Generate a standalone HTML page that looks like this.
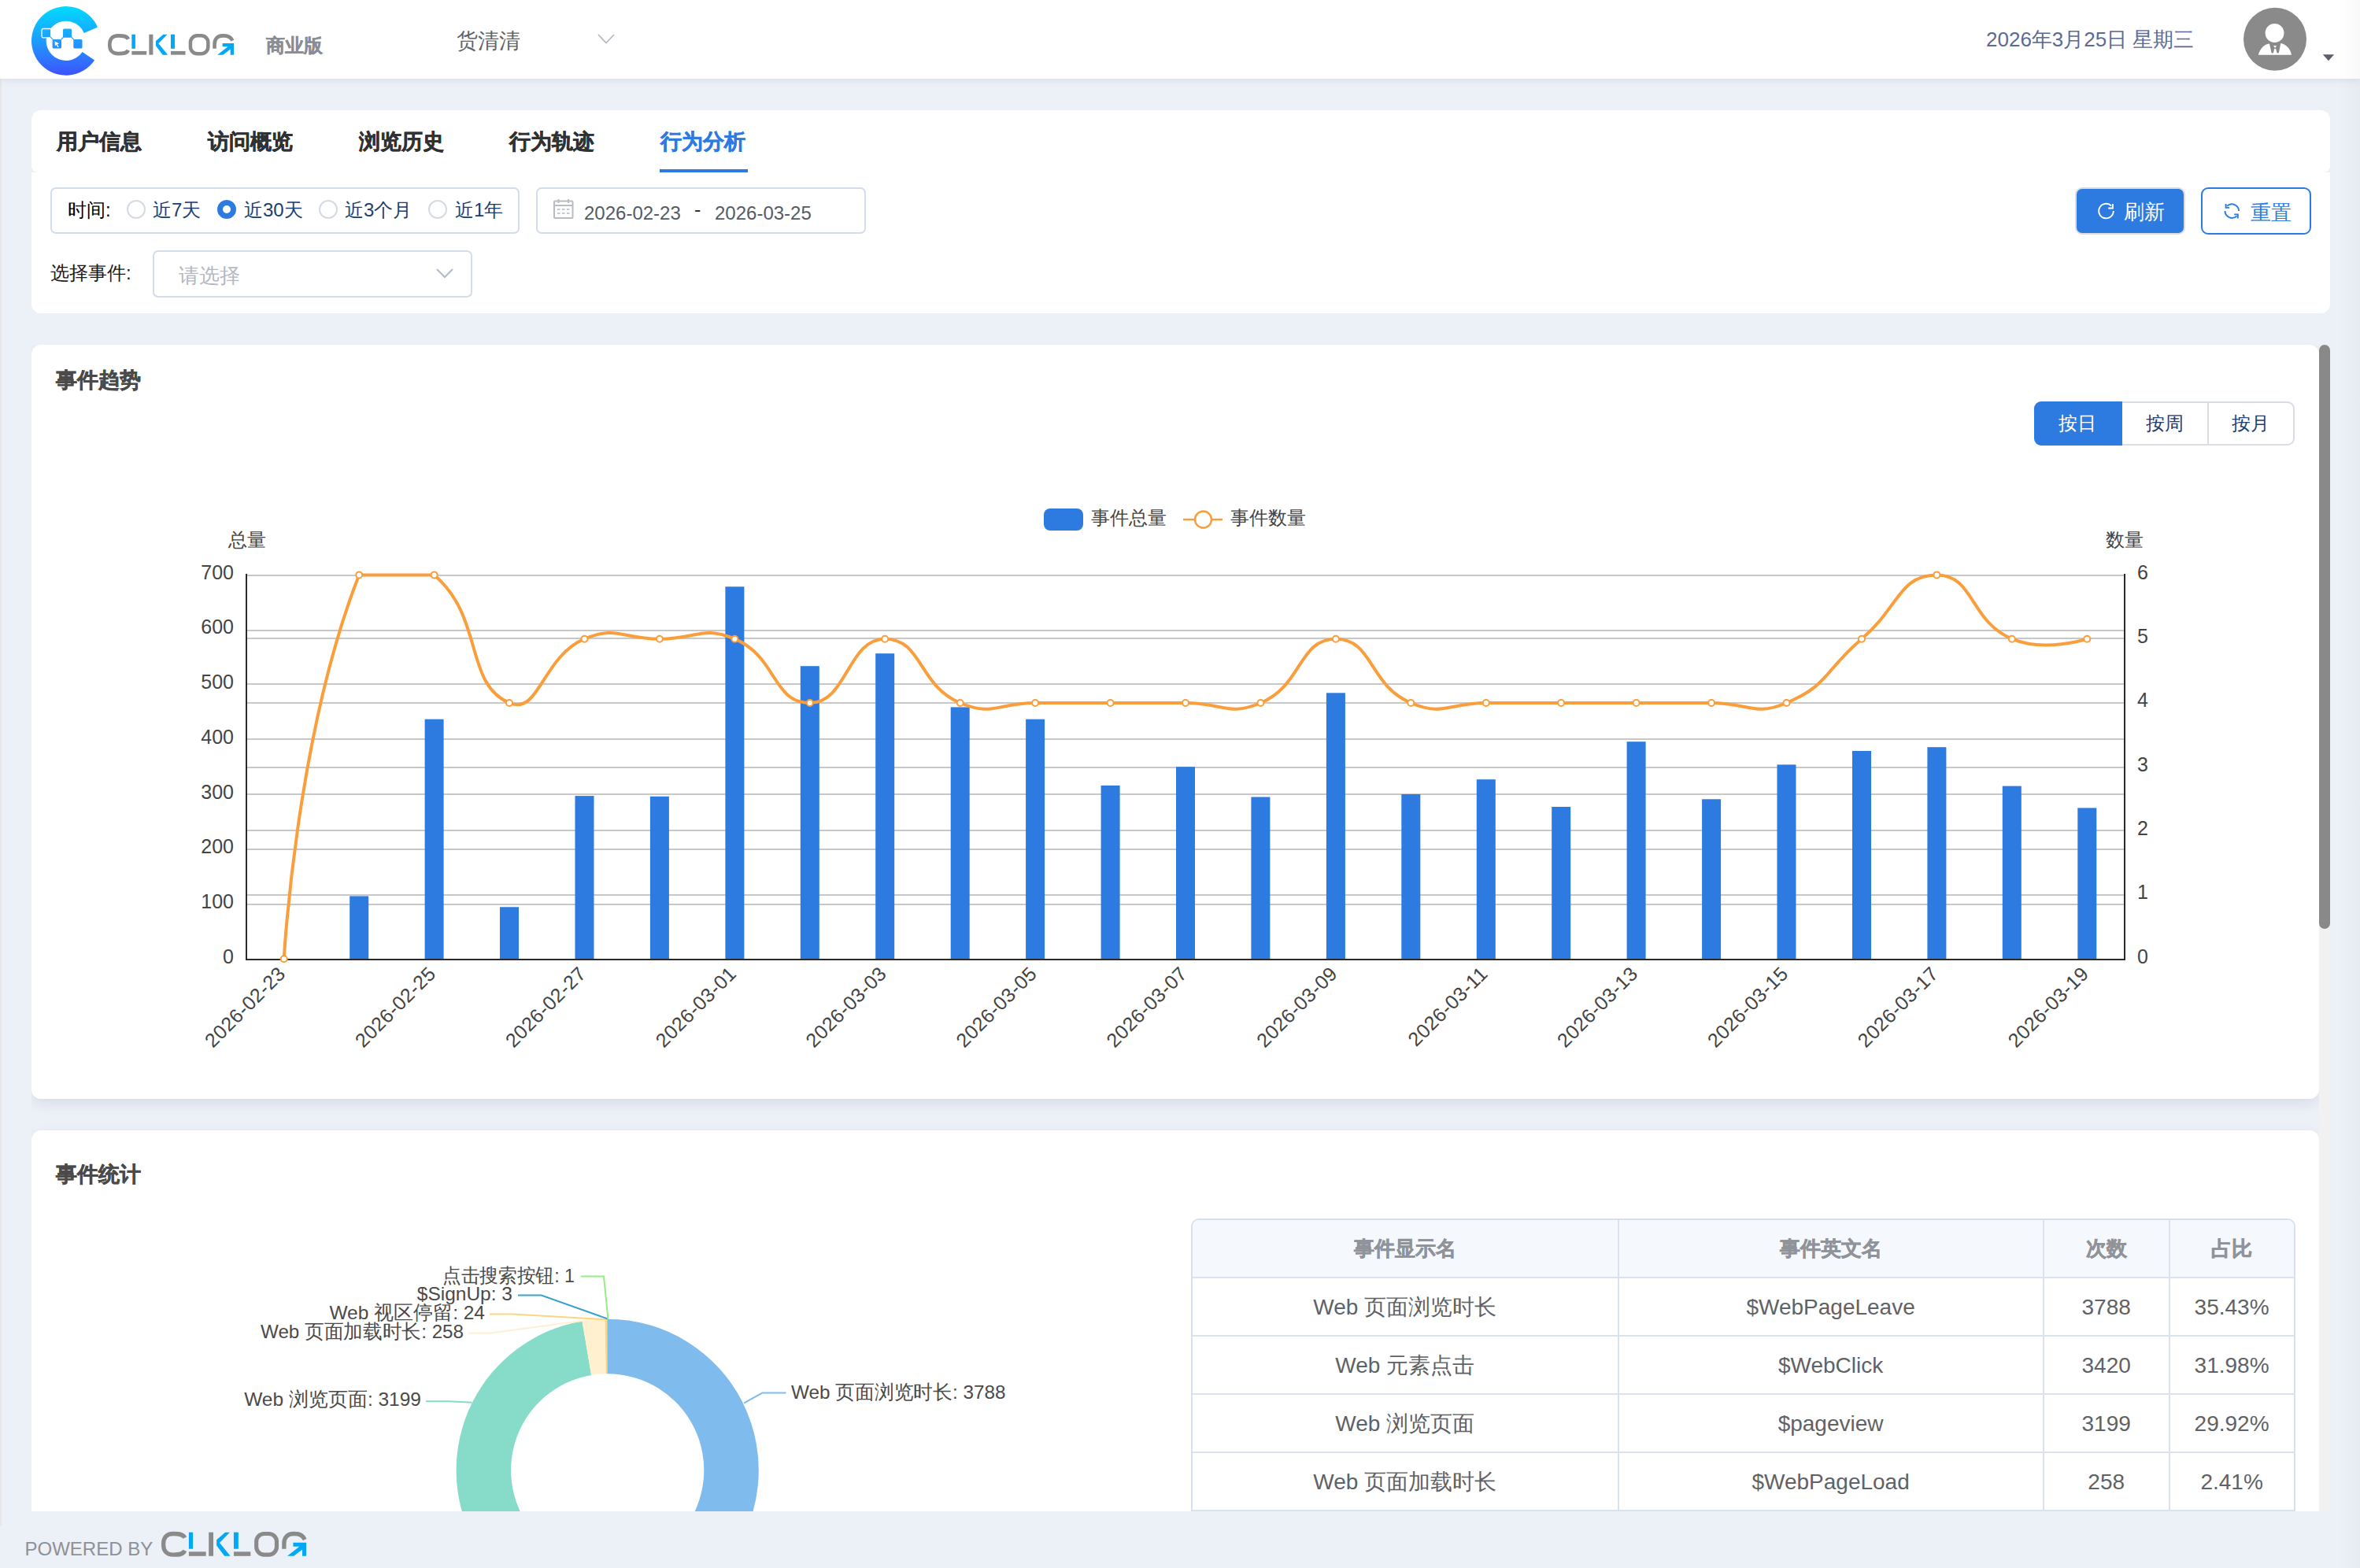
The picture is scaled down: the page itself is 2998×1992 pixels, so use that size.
<!DOCTYPE html>
<html><head><meta charset="utf-8"><title>CLKLOG</title>
<style>
*{box-sizing:border-box;margin:0;padding:0}
html,body{width:2998px;height:1992px;overflow:hidden}
body{background:#ecf0f7;font-family:"Liberation Sans", sans-serif;position:relative}
.abs{position:absolute}
.t{position:absolute;white-space:nowrap;line-height:1}
.header{position:absolute;left:0;top:0;width:2998px;height:100px;background:#fff;box-shadow:0 2px 10px rgba(0,30,80,0.08);z-index:2}
.card{position:absolute;background:#fff;border-radius:12px}
.box{position:absolute;border:2px solid #d3dcea;border-radius:7px;background:#fff}
.radio{position:absolute;width:24px;height:24px;border-radius:50%;border:2px solid #d5dae2;background:#fff}
.radio.on{background:#2d7be0;border-color:#2d7be0}
.radio.on::after{content:"";position:absolute;left:5px;top:5px;width:10px;height:10px;border-radius:50%;background:#fff}
svg text{font-family:"Liberation Sans", sans-serif}
table{border-collapse:collapse}
</style></head><body>
<div class="abs" style="left:0;top:100px;width:2px;height:1839px;background:#e6e6e6"></div>
<div class="header">
<div class="t" style="left:338px;top:45.5px;font-size:24px;font-weight:bold;color:#8a8d93;-webkit-text-stroke:0.3px #8a8d93">商业版</div>
<div class="t" style="left:579.5px;top:38.5px;font-size:27px;color:#606266">货清清</div>
<div class="t" style="left:2523px;top:37px;font-size:26px;color:#5d6a94">2026年3月25日 星期三</div>
</div>
<div class="card" style="left:40px;top:140px;width:2920px;height:79px;border-radius:12px 12px 8px 8px"></div>
<div class="card" style="left:40px;top:219px;width:2920px;height:179px;border-radius:0 0 12px 12px"></div>
<div class="t" style="left:72.0px;top:167px;font-size:27px;font-weight:bold;color:#303133;-webkit-text-stroke:0.5px #303133">用户信息</div>
<div class="t" style="left:263.8px;top:167px;font-size:27px;font-weight:bold;color:#303133;-webkit-text-stroke:0.5px #303133">访问概览</div>
<div class="t" style="left:455.5px;top:167px;font-size:27px;font-weight:bold;color:#303133;-webkit-text-stroke:0.5px #303133">浏览历史</div>
<div class="t" style="left:647.2px;top:167px;font-size:27px;font-weight:bold;color:#303133;-webkit-text-stroke:0.5px #303133">行为轨迹</div>
<div class="t" style="left:839.0px;top:167px;font-size:27px;font-weight:bold;color:#2d7be0;-webkit-text-stroke:0.5px #2d7be0">行为分析</div>
<div class="abs" style="left:838px;top:215px;width:112px;height:4px;background:#2d7be0"></div>
<div class="box" style="left:64px;top:238px;width:596px;height:59px"></div>
<div class="t" style="left:86px;top:255px;font-size:24px;color:#000">时间:</div>
<div class="radio" style="left:161px;top:254px"></div>
<div class="radio on" style="left:276px;top:254px"></div>
<div class="radio" style="left:405px;top:254px"></div>
<div class="radio" style="left:544px;top:254px"></div>
<div class="t" style="left:194px;top:255px;font-size:24px;color:#1d3c6e">近7天</div>
<div class="t" style="left:310px;top:255px;font-size:24px;color:#1d3c6e">近30天</div>
<div class="t" style="left:438px;top:255px;font-size:24px;color:#1d3c6e">近3个月</div>
<div class="t" style="left:578px;top:255px;font-size:24px;color:#1d3c6e">近1年</div>
<div class="box" style="left:681px;top:238px;width:419px;height:59px"></div>
<div class="t" style="left:742px;top:259px;font-size:24px;color:#555a63">2026-02-23</div>
<div class="t" style="left:882px;top:254px;font-size:25px;color:#303133">-</div>
<div class="t" style="left:908px;top:259px;font-size:24px;color:#555a63">2026-03-25</div>
<div class="t" style="left:64px;top:335px;font-size:24px;color:#1a1a1a">选择事件:</div>
<div class="box" style="left:194px;top:318px;width:406px;height:60px"></div>
<div class="t" style="left:226.5px;top:337.3px;font-size:26px;color:#b4b8c0">请选择</div>
<div class="abs" style="left:2636px;top:238px;width:140px;height:60px;border-radius:9px;background:#2d7be0;border:2px solid #dcdcdc"></div>
<div class="t" style="left:2698px;top:256.3px;font-size:26px;color:#fff">刷新</div>
<div class="abs" style="left:2796px;top:238px;width:140px;height:60px;border-radius:9px;background:#fff;border:2px solid #2d7be0"></div>
<div class="t" style="left:2858.7px;top:256.8px;font-size:26px;color:#2d7be0">重置</div>
<div class="abs" style="left:40px;top:438px;width:2920px;height:1482px;overflow:hidden">
<div class="card" style="left:0;top:0;width:2906px;height:958px;box-shadow:0 6px 16px rgba(40,60,100,0.10)"></div>
<div class="card" style="left:0;top:998px;width:2906px;height:700px;box-shadow:0 6px 16px rgba(40,60,100,0.10)"></div>
<div class="abs" style="left:2906px;top:0;width:14px;height:1482px;background:#f1f1f1"></div>
<div class="abs" style="left:2906px;top:0;width:14px;height:742px;background:#898989;border-radius:7px"></div>
</div>
<div class="t" style="left:70.5px;top:470px;font-size:27px;font-weight:bold;color:#4a4a4a;-webkit-text-stroke:0.5px #4a4a4a">事件趋势</div>
<div class="abs" style="left:2584px;top:510px;width:331px;height:56px;border:2px solid #d8dde6;border-radius:9px"></div>
<div class="abs" style="left:2584px;top:510px;width:112px;height:56px;background:#2d7be0;border-radius:9px 0 0 9px"></div>
<div class="abs" style="left:2804px;top:512px;width:2px;height:52px;background:#d8dde6"></div>
<div class="t" style="left:2615.3px;top:526.3px;font-size:24px;color:#fff">按日</div>
<div class="t" style="left:2725.5px;top:526.3px;font-size:24px;color:#1f3f70">按周</div>
<div class="t" style="left:2835.3px;top:526.3px;font-size:24px;color:#1f3f70">按月</div>
<div class="t" style="left:70.5px;top:1479px;font-size:27px;font-weight:bold;color:#4a4a4a;-webkit-text-stroke:0.5px #4a4a4a">事件统计</div>
<div class="abs" style="left:1513px;top:1548px;width:1403px;height:372px;overflow:hidden">
<div class="abs" style="left:0;top:0;width:1403px;height:500px;border:2px solid #d6e0ee;border-radius:10px 10px 0 0;background:#fff;overflow:hidden">
<div class="abs" style="left:0;top:0;width:1400px;height:72px;background:#f5f9fe"></div>
<div class="abs" style="left:0;top:72px;width:1400px;height:2px;background:#d9e2ee"></div>
<div class="abs" style="left:0;top:146px;width:1400px;height:2px;background:#d9e2ee"></div>
<div class="abs" style="left:0;top:220px;width:1400px;height:2px;background:#d9e2ee"></div>
<div class="abs" style="left:0;top:294px;width:1400px;height:2px;background:#d9e2ee"></div>
<div class="abs" style="left:0;top:368px;width:1400px;height:2px;background:#d9e2ee"></div>
<div class="abs" style="left:540.0px;top:0;width:2px;height:500px;background:#d9e2ee"></div>
<div class="abs" style="left:1079.9px;top:0;width:2px;height:500px;background:#d9e2ee"></div>
<div class="abs" style="left:1240.2px;top:0;width:2px;height:500px;background:#d9e2ee"></div>
</div></div>
<div class="t" style="left:1784.8px;top:1573px;width:400px;margin-left:-200px;text-align:center;font-size:26px;font-weight:bold;color:#909399;-webkit-text-stroke:0.5px #909399">事件显示名</div>
<div class="t" style="left:2325.6px;top:1573px;width:400px;margin-left:-200px;text-align:center;font-size:26px;font-weight:bold;color:#909399;-webkit-text-stroke:0.5px #909399">事件英文名</div>
<div class="t" style="left:2675.7px;top:1573px;width:400px;margin-left:-200px;text-align:center;font-size:26px;font-weight:bold;color:#909399;-webkit-text-stroke:0.5px #909399">次数</div>
<div class="t" style="left:2835.1px;top:1573px;width:400px;margin-left:-200px;text-align:center;font-size:26px;font-weight:bold;color:#909399;-webkit-text-stroke:0.5px #909399">占比</div>
<div class="t" style="left:1784.8px;top:1647px;width:500px;margin-left:-250px;text-align:center;font-size:28px;color:#606266">Web 页面浏览时长</div>
<div class="t" style="left:2325.6px;top:1647px;width:500px;margin-left:-250px;text-align:center;font-size:28px;color:#606266">$WebPageLeave</div>
<div class="t" style="left:2675.7px;top:1647px;width:500px;margin-left:-250px;text-align:center;font-size:28px;color:#606266">3788</div>
<div class="t" style="left:2835.1px;top:1647px;width:500px;margin-left:-250px;text-align:center;font-size:28px;color:#606266">35.43%</div>
<div class="t" style="left:1784.8px;top:1721px;width:500px;margin-left:-250px;text-align:center;font-size:28px;color:#606266">Web 元素点击</div>
<div class="t" style="left:2325.6px;top:1721px;width:500px;margin-left:-250px;text-align:center;font-size:28px;color:#606266">$WebClick</div>
<div class="t" style="left:2675.7px;top:1721px;width:500px;margin-left:-250px;text-align:center;font-size:28px;color:#606266">3420</div>
<div class="t" style="left:2835.1px;top:1721px;width:500px;margin-left:-250px;text-align:center;font-size:28px;color:#606266">31.98%</div>
<div class="t" style="left:1784.8px;top:1795px;width:500px;margin-left:-250px;text-align:center;font-size:28px;color:#606266">Web 浏览页面</div>
<div class="t" style="left:2325.6px;top:1795px;width:500px;margin-left:-250px;text-align:center;font-size:28px;color:#606266">$pageview</div>
<div class="t" style="left:2675.7px;top:1795px;width:500px;margin-left:-250px;text-align:center;font-size:28px;color:#606266">3199</div>
<div class="t" style="left:2835.1px;top:1795px;width:500px;margin-left:-250px;text-align:center;font-size:28px;color:#606266">29.92%</div>
<div class="t" style="left:1784.8px;top:1869px;width:500px;margin-left:-250px;text-align:center;font-size:28px;color:#606266">Web 页面加载时长</div>
<div class="t" style="left:2325.6px;top:1869px;width:500px;margin-left:-250px;text-align:center;font-size:28px;color:#606266">$WebPageLoad</div>
<div class="t" style="left:2675.7px;top:1869px;width:500px;margin-left:-250px;text-align:center;font-size:28px;color:#606266">258</div>
<div class="t" style="left:2835.1px;top:1869px;width:500px;margin-left:-250px;text-align:center;font-size:28px;color:#606266">2.41%</div>
<div class="t" style="left:31.5px;top:1956px;font-size:24px;color:#8e9196">POWERED BY</div>
<div class="abs" style="left:2970px;top:0;width:28px;height:1992px;background:linear-gradient(90deg,rgba(0,0,0,0),rgba(0,0,0,0.025));z-index:6"></div>
<svg class="abs" style="left:0;top:0;z-index:5" width="2998" height="1992" viewBox="0 0 2998 1992">
<defs>
<clipPath id="scl"><rect x="40" y="438" width="2906" height="1482"/></clipPath></defs>
<defs><linearGradient id="lg" x1="0" y1="8" x2="0" y2="96" gradientUnits="userSpaceOnUse">
<stop offset="0" stop-color="#00dcff"/><stop offset="0.5" stop-color="#1e9bff"/><stop offset="1" stop-color="#3e52ff"/></linearGradient></defs>
<g fill="url(#lg)">
<path d="M123.97 34.43 A43.80 43.80 0 1 0 120.11 76.39 L104.61 65.94 A25.10 25.10 0 1 1 106.82 41.89 Z"/>
<rect x="53.1" y="36.5" width="11.7" height="11.3" rx="1.6" stroke="#fff" stroke-width="1.3"/>
<rect x="80.0" y="36.5" width="11.0" height="11.3" rx="1.6"/>
<rect x="66.6" y="49.9" width="11.4" height="11.7" rx="1.6"/>
<rect x="93.3" y="49.9" width="11.2" height="11.7" rx="1.6"/>
</g>
<g stroke="#1ea0ff" stroke-width="1.1">
<line x1="64" y1="47" x2="67.8" y2="50.6"/><line x1="77.5" y1="50.5" x2="80.8" y2="47"/><line x1="90.5" y1="47" x2="94" y2="50.6"/></g>
<path d="M69.5 52.2 L75.2 55.5 L72.6 56.2 L74.6 59.6 L73.4 60.2 L71.5 56.8 L69.9 58.6 Z" fill="#fff"/>

<g transform="translate(137 43) scale(0.07191 0.072368) translate(-60 -75)">
<path d="M420 168 C395 112 335 107 250 107 L240 107 C140 107 92 165 92 255 L92 275 C92 365 140 423 240 423 L250 423 C335 423 395 418 420 362" fill="none" stroke="#8a8a8a" stroke-width="64"/>
<rect x="482" y="85" width="63" height="250" fill="#00a8f5"/>
<rect x="482" y="378" width="263" height="65" fill="#8a8a8a"/>
<rect x="788" y="85" width="70" height="358" fill="#8a8a8a"/>
<polygon points="1040,85 1110,85 955,245 1120,443 1030,443 908,285 908,200" fill="#00a8f5"/>
<rect x="1172" y="85" width="71" height="250" fill="#00a8f5"/>
<rect x="1172" y="378" width="258" height="65" fill="#8a8a8a"/>
<rect x="1519" y="107" width="312" height="316" rx="120" ry="120" fill="none" stroke="#8a8a8a" stroke-width="62"/>
<path d="M1945 335 L1945 255 C1945 160 2000 107 2090 107 L2110 107 C2200 107 2240 140 2262 195" fill="none" stroke="#8a8a8a" stroke-width="64"/>
<polygon points="2085,240 2285,240 2285,443 2225,443 2225,345 2095,443 1995,443 2180,300 2085,300" fill="#00a8f5"/>
</g>
<g transform="translate(205 1945.8) scale(0.082697 0.084211) translate(-60 -75)">
<path d="M420 168 C395 112 335 107 250 107 L240 107 C140 107 92 165 92 255 L92 275 C92 365 140 423 240 423 L250 423 C335 423 395 418 420 362" fill="none" stroke="#8a8a8a" stroke-width="64"/>
<rect x="482" y="85" width="63" height="250" fill="#00a8f5"/>
<rect x="482" y="378" width="263" height="65" fill="#8a8a8a"/>
<rect x="788" y="85" width="70" height="358" fill="#8a8a8a"/>
<polygon points="1040,85 1110,85 955,245 1120,443 1030,443 908,285 908,200" fill="#00a8f5"/>
<rect x="1172" y="85" width="71" height="250" fill="#00a8f5"/>
<rect x="1172" y="378" width="258" height="65" fill="#8a8a8a"/>
<rect x="1519" y="107" width="312" height="316" rx="120" ry="120" fill="none" stroke="#8a8a8a" stroke-width="62"/>
<path d="M1945 335 L1945 255 C1945 160 2000 107 2090 107 L2110 107 C2200 107 2240 140 2262 195" fill="none" stroke="#8a8a8a" stroke-width="64"/>
<polygon points="2085,240 2285,240 2285,443 2225,443 2225,345 2095,443 1995,443 2180,300 2085,300" fill="#00a8f5"/>
</g>
<polyline points="760,44 770,54.5 780,44" fill="none" stroke="#b3bac6" stroke-width="1.8"/>
<circle cx="2890" cy="49.8" r="40" fill="#8a8a8a"/>
<circle cx="2889.54" cy="42.04" r="11.92" fill="#fff"/>
<path d="M2868.75 69.83 C2871.08 61.19 2876.58 56.1 2882.88 55.39 L2897.73 54.88 C2904.64 56.71 2909.73 62.2 2911.05 69.83 Z" fill="#fff"/>
<path d="M2882.88 54.88 L2897.32 54.88 L2894.88 66.88 Q2893.66 68.1 2892.44 66.88 L2891.02 61.39 L2890.2 62.2 L2889.39 61.39 L2887.96 66.88 Q2886.74 68.1 2885.52 66.88 Z" fill="#8a8a8a"/>
<polygon points="2887.96,57.93 2892.03,57.93 2890.2,60.98" fill="#fff"/>
<polygon points="2950.8,69.3 2965.1,69.3 2958,77.3" fill="#5b606c"/>
<g fill="none" stroke="#b8bcc4" stroke-width="2"><rect x="704" y="255.5" width="23.5" height="21.5" rx="1"/><line x1="704" y1="261" x2="727.5" y2="261"/><line x1="709.5" y1="253" x2="709.5" y2="258"/><line x1="722" y1="253" x2="722" y2="258"/></g>
<g fill="#c4c8ce"><rect x="708" y="265" width="3.5" height="2"/><rect x="714" y="265" width="3.5" height="2"/><rect x="720" y="265" width="3.5" height="2"/><rect x="708" y="270" width="3.5" height="2"/><rect x="714" y="270" width="3.5" height="2"/><rect x="720" y="270" width="3.5" height="2"/></g>
<polyline points="555,342 565,352 575,342" fill="none" stroke="#b3bac6" stroke-width="2"/>
<path d="M2684.8 268.1 A9.3 9.3 0 1 1 2682.1 261.5" fill="none" stroke="#fff" stroke-width="1.9"/>
<polyline points="2678.2,264.5 2683.9,264.5 2683.9,258.9" fill="none" stroke="#fff" stroke-width="1.9"/>
<path d="M2844.1 268.1 A8.8 8.8 0 0 0 2829.1 261.9 M2826.5 268.1 A8.8 8.8 0 0 0 2841.5 274.3" fill="none" stroke="#2d7be0" stroke-width="1.9"/>
<polyline points="2827.6,259 2827.6,263.9 2832.2,263.9" fill="none" stroke="#2d7be0" stroke-width="1.9"/>
<polyline points="2838.1,272.4 2842.8,272.4 2842.8,277.4" fill="none" stroke="#2d7be0" stroke-width="1.9"/>
<g clip-path="url(#scl)">
<line x1="313.0" y1="1149.0" x2="2699.0" y2="1149.0" stroke="#c8c8c8" stroke-width="2"/>
<line x1="313.0" y1="1079.0" x2="2699.0" y2="1079.0" stroke="#c8c8c8" stroke-width="2"/>
<line x1="313.0" y1="1009.0" x2="2699.0" y2="1009.0" stroke="#c8c8c8" stroke-width="2"/>
<line x1="313.0" y1="939.0" x2="2699.0" y2="939.0" stroke="#c8c8c8" stroke-width="2"/>
<line x1="313.0" y1="869.0" x2="2699.0" y2="869.0" stroke="#c8c8c8" stroke-width="2"/>
<line x1="313.0" y1="801.0" x2="2699.0" y2="801.0" stroke="#c8c8c8" stroke-width="2"/>
<line x1="313.0" y1="731.0" x2="2699.0" y2="731.0" stroke="#c8c8c8" stroke-width="2"/>
<line x1="313.0" y1="1137.0" x2="2699.0" y2="1137.0" stroke="#c8c8c8" stroke-width="2"/>
<line x1="313.0" y1="1055.0" x2="2699.0" y2="1055.0" stroke="#c8c8c8" stroke-width="2"/>
<line x1="313.0" y1="975.0" x2="2699.0" y2="975.0" stroke="#c8c8c8" stroke-width="2"/>
<line x1="313.0" y1="893.0" x2="2699.0" y2="893.0" stroke="#c8c8c8" stroke-width="2"/>
<line x1="313.0" y1="811.0" x2="2699.0" y2="811.0" stroke="#c8c8c8" stroke-width="2"/>
<line x1="313.0" y1="731.0" x2="2699.0" y2="731.0" stroke="#c8c8c8" stroke-width="2"/>
<rect x="444.2" y="1138.4" width="24" height="80.6" fill="#2d7be0"/>
<rect x="539.6" y="913.7" width="24" height="305.3" fill="#2d7be0"/>
<rect x="635.0" y="1152.3" width="24" height="66.7" fill="#2d7be0"/>
<rect x="730.5" y="1011.1" width="24" height="207.9" fill="#2d7be0"/>
<rect x="825.9" y="1011.8" width="24" height="207.2" fill="#2d7be0"/>
<rect x="921.4" y="745.3" width="24" height="473.7" fill="#2d7be0"/>
<rect x="1016.8" y="846.2" width="24" height="372.8" fill="#2d7be0"/>
<rect x="1112.2" y="830.2" width="24" height="388.8" fill="#2d7be0"/>
<rect x="1207.7" y="898.4" width="24" height="320.6" fill="#2d7be0"/>
<rect x="1303.1" y="913.7" width="24" height="305.3" fill="#2d7be0"/>
<rect x="1398.6" y="997.9" width="24" height="221.1" fill="#2d7be0"/>
<rect x="1494.0" y="974.2" width="24" height="244.8" fill="#2d7be0"/>
<rect x="1589.4" y="1012.5" width="24" height="206.5" fill="#2d7be0"/>
<rect x="1684.9" y="880.3" width="24" height="338.7" fill="#2d7be0"/>
<rect x="1780.3" y="1009.0" width="24" height="210.0" fill="#2d7be0"/>
<rect x="1875.8" y="990.2" width="24" height="228.8" fill="#2d7be0"/>
<rect x="1971.2" y="1025.0" width="24" height="194.0" fill="#2d7be0"/>
<rect x="2066.6" y="942.2" width="24" height="276.8" fill="#2d7be0"/>
<rect x="2162.1" y="1015.3" width="24" height="203.7" fill="#2d7be0"/>
<rect x="2257.5" y="971.4" width="24" height="247.6" fill="#2d7be0"/>
<rect x="2353.0" y="954.0" width="24" height="265.0" fill="#2d7be0"/>
<rect x="2448.4" y="949.2" width="24" height="269.8" fill="#2d7be0"/>
<rect x="2543.8" y="998.6" width="24" height="220.4" fill="#2d7be0"/>
<rect x="2639.3" y="1026.4" width="24" height="192.6" fill="#2d7be0"/>
<line x1="313.0" y1="729.0" x2="313.0" y2="1220.0" stroke="#2a2a2a" stroke-width="2"/>
<line x1="2699.0" y1="729.0" x2="2699.0" y2="1220.0" stroke="#2a2a2a" stroke-width="2"/>
<line x1="312.0" y1="1219.0" x2="2700.0" y2="1219.0" stroke="#2a2a2a" stroke-width="2"/>
<path d="M360.72 1218.20 C360.72 1218.20 376.09 935.01 456.16 730.40 C471.53 730.40 519.52 730.40 551.60 730.40 C614.96 784.38 589.72 868.59 647.04 893.00 C685.16 909.24 688.29 834.78 742.48 811.70 C783.73 794.13 790.20 811.70 837.92 811.70 C885.64 811.70 892.11 794.13 933.36 811.70 C987.55 834.78 981.08 893.00 1028.80 893.00 C1076.52 893.00 1076.52 811.70 1124.24 811.70 C1171.96 811.70 1165.49 869.92 1219.68 893.00 C1260.93 910.57 1267.40 893.00 1315.12 893.00 C1362.84 893.00 1362.84 893.00 1410.56 893.00 C1458.28 893.00 1458.28 893.00 1506.00 893.00 C1553.72 893.00 1560.19 910.57 1601.44 893.00 C1655.63 869.92 1649.16 811.70 1696.88 811.70 C1744.60 811.70 1738.13 869.92 1792.32 893.00 C1833.57 910.57 1840.04 893.00 1887.76 893.00 C1935.48 893.00 1935.48 893.00 1983.20 893.00 C2030.92 893.00 2030.92 893.00 2078.64 893.00 C2126.36 893.00 2126.36 893.00 2174.08 893.00 C2221.80 893.00 2228.27 910.57 2269.52 893.00 C2323.71 869.92 2317.24 852.35 2364.96 811.70 C2412.68 771.05 2412.68 730.40 2460.40 730.40 C2508.12 730.40 2501.65 788.62 2555.84 811.70 C2597.09 829.27 2651.28 811.70 2651.28 811.70" fill="none" stroke="#fa9e3c" stroke-width="4" stroke-linejoin="round"/>
<circle cx="360.7" cy="1218.2" r="4" fill="#fff" stroke="#fa9e3c" stroke-width="2"/>
<circle cx="456.2" cy="730.4" r="4" fill="#fff" stroke="#fa9e3c" stroke-width="2"/>
<circle cx="551.6" cy="730.4" r="4" fill="#fff" stroke="#fa9e3c" stroke-width="2"/>
<circle cx="647.0" cy="893.0" r="4" fill="#fff" stroke="#fa9e3c" stroke-width="2"/>
<circle cx="742.5" cy="811.7" r="4" fill="#fff" stroke="#fa9e3c" stroke-width="2"/>
<circle cx="837.9" cy="811.7" r="4" fill="#fff" stroke="#fa9e3c" stroke-width="2"/>
<circle cx="933.4" cy="811.7" r="4" fill="#fff" stroke="#fa9e3c" stroke-width="2"/>
<circle cx="1028.8" cy="893.0" r="4" fill="#fff" stroke="#fa9e3c" stroke-width="2"/>
<circle cx="1124.2" cy="811.7" r="4" fill="#fff" stroke="#fa9e3c" stroke-width="2"/>
<circle cx="1219.7" cy="893.0" r="4" fill="#fff" stroke="#fa9e3c" stroke-width="2"/>
<circle cx="1315.1" cy="893.0" r="4" fill="#fff" stroke="#fa9e3c" stroke-width="2"/>
<circle cx="1410.6" cy="893.0" r="4" fill="#fff" stroke="#fa9e3c" stroke-width="2"/>
<circle cx="1506.0" cy="893.0" r="4" fill="#fff" stroke="#fa9e3c" stroke-width="2"/>
<circle cx="1601.4" cy="893.0" r="4" fill="#fff" stroke="#fa9e3c" stroke-width="2"/>
<circle cx="1696.9" cy="811.7" r="4" fill="#fff" stroke="#fa9e3c" stroke-width="2"/>
<circle cx="1792.3" cy="893.0" r="4" fill="#fff" stroke="#fa9e3c" stroke-width="2"/>
<circle cx="1887.8" cy="893.0" r="4" fill="#fff" stroke="#fa9e3c" stroke-width="2"/>
<circle cx="1983.2" cy="893.0" r="4" fill="#fff" stroke="#fa9e3c" stroke-width="2"/>
<circle cx="2078.6" cy="893.0" r="4" fill="#fff" stroke="#fa9e3c" stroke-width="2"/>
<circle cx="2174.1" cy="893.0" r="4" fill="#fff" stroke="#fa9e3c" stroke-width="2"/>
<circle cx="2269.5" cy="893.0" r="4" fill="#fff" stroke="#fa9e3c" stroke-width="2"/>
<circle cx="2365.0" cy="811.7" r="4" fill="#fff" stroke="#fa9e3c" stroke-width="2"/>
<circle cx="2460.4" cy="730.4" r="4" fill="#fff" stroke="#fa9e3c" stroke-width="2"/>
<circle cx="2555.8" cy="811.7" r="4" fill="#fff" stroke="#fa9e3c" stroke-width="2"/>
<circle cx="2651.3" cy="811.7" r="4" fill="#fff" stroke="#fa9e3c" stroke-width="2"/>
<text x="297" y="1223.6" font-size="25" fill="#444" text-anchor="end">0</text>
<text x="297" y="1153.9" font-size="25" fill="#444" text-anchor="end">100</text>
<text x="297" y="1084.2" font-size="25" fill="#444" text-anchor="end">200</text>
<text x="297" y="1014.5" font-size="25" fill="#444" text-anchor="end">300</text>
<text x="297" y="944.7" font-size="25" fill="#444" text-anchor="end">400</text>
<text x="297" y="875.0" font-size="25" fill="#444" text-anchor="end">500</text>
<text x="297" y="805.3" font-size="25" fill="#444" text-anchor="end">600</text>
<text x="297" y="735.6" font-size="25" fill="#444" text-anchor="end">700</text>
<text x="2715" y="1223.6" font-size="25" fill="#444">0</text>
<text x="2715" y="1142.3" font-size="25" fill="#444">1</text>
<text x="2715" y="1060.9" font-size="25" fill="#444">2</text>
<text x="2715" y="979.6" font-size="25" fill="#444">3</text>
<text x="2715" y="898.3" font-size="25" fill="#444">4</text>
<text x="2715" y="816.9" font-size="25" fill="#444">5</text>
<text x="2715" y="735.6" font-size="25" fill="#444">6</text>
<text x="313.5" y="694" font-size="24" fill="#444" text-anchor="middle">总量</text>
<text x="2699" y="694" font-size="24" fill="#444" text-anchor="middle">数量</text>
<text transform="translate(360.7 1235.0) rotate(-45)" y="5" font-size="25" letter-spacing="0.45" fill="#444" text-anchor="end">2026-02-23</text>
<text transform="translate(551.6 1235.0) rotate(-45)" y="5" font-size="25" letter-spacing="0.45" fill="#444" text-anchor="end">2026-02-25</text>
<text transform="translate(742.5 1235.0) rotate(-45)" y="5" font-size="25" letter-spacing="0.45" fill="#444" text-anchor="end">2026-02-27</text>
<text transform="translate(933.4 1235.0) rotate(-45)" y="5" font-size="25" letter-spacing="0.45" fill="#444" text-anchor="end">2026-03-01</text>
<text transform="translate(1124.2 1235.0) rotate(-45)" y="5" font-size="25" letter-spacing="0.45" fill="#444" text-anchor="end">2026-03-03</text>
<text transform="translate(1315.1 1235.0) rotate(-45)" y="5" font-size="25" letter-spacing="0.45" fill="#444" text-anchor="end">2026-03-05</text>
<text transform="translate(1506.0 1235.0) rotate(-45)" y="5" font-size="25" letter-spacing="0.45" fill="#444" text-anchor="end">2026-03-07</text>
<text transform="translate(1696.9 1235.0) rotate(-45)" y="5" font-size="25" letter-spacing="0.45" fill="#444" text-anchor="end">2026-03-09</text>
<text transform="translate(1887.8 1235.0) rotate(-45)" y="5" font-size="25" letter-spacing="0.45" fill="#444" text-anchor="end">2026-03-11</text>
<text transform="translate(2078.6 1235.0) rotate(-45)" y="5" font-size="25" letter-spacing="0.45" fill="#444" text-anchor="end">2026-03-13</text>
<text transform="translate(2269.5 1235.0) rotate(-45)" y="5" font-size="25" letter-spacing="0.45" fill="#444" text-anchor="end">2026-03-15</text>
<text transform="translate(2460.4 1235.0) rotate(-45)" y="5" font-size="25" letter-spacing="0.45" fill="#444" text-anchor="end">2026-03-17</text>
<text transform="translate(2651.3 1235.0) rotate(-45)" y="5" font-size="25" letter-spacing="0.45" fill="#444" text-anchor="end">2026-03-19</text>
<rect x="1326" y="646" width="50" height="28" rx="8" fill="#2d7be0"/>
<text x="1386" y="666" font-size="24" fill="#444">事件总量</text>
<line x1="1503" y1="660" x2="1553" y2="660" stroke="#fa9e3c" stroke-width="2.5"/>
<circle cx="1528.5" cy="660" r="10.5" fill="#fff" stroke="#fa9e3c" stroke-width="2.5"/>
<text x="1563" y="666" font-size="24" fill="#444">事件数量</text>
<path d="M771.70 1675.70 A192.10 192.10 0 0 1 924.04 1984.82 L868.93 1942.49 A122.60 122.60 0 0 0 771.70 1745.20 Z" fill="#80bbee"/>
<path d="M924.04 1984.82 A192.10 192.10 0 0 1 601.04 1955.99 L662.78 1924.09 A122.60 122.60 0 0 0 868.93 1942.49 Z" fill="#f3a4a4"/>
<path d="M601.04 1955.99 A192.10 192.10 0 0 1 739.57 1678.41 L751.19 1746.93 A122.60 122.60 0 0 0 662.78 1924.09 Z" fill="#87dcc9"/>
<path d="M739.57 1678.41 A192.10 192.10 0 0 1 768.54 1675.73 L769.68 1745.22 A122.60 122.60 0 0 0 751.19 1746.93 Z" fill="#fff0cf"/>
<path d="M768.54 1675.73 A192.10 192.10 0 0 1 771.25 1675.70 L771.41 1745.20 A122.60 122.60 0 0 0 769.68 1745.22 Z" fill="#fcd57e"/>
<path d="M771.25 1675.70 A192.10 192.10 0 0 1 771.59 1675.70 L771.63 1745.20 A122.60 122.60 0 0 0 771.41 1745.20 Z" fill="#3aa2cc"/>
<path d="M771.59 1675.70 A192.10 192.10 0 0 1 771.70 1675.70 L771.70 1745.20 A122.60 122.60 0 0 0 771.63 1745.20 Z" fill="#94ef80"/>
<polyline points="944.9,1782.5 968.4,1769.5 998.5,1769.5" fill="none" stroke="#80bbee" stroke-width="2"/>
<polyline points="599.7,1781.7 571.0,1780.3 541.0,1780.3" fill="none" stroke="#87dcc9" stroke-width="2"/>
<polyline points="755.5,1675.8 624.0,1693.4 595.5,1693.4" fill="none" stroke="#fff0cf" stroke-width="2"/>
<polyline points="772.0,1676.5 651.7,1669.4 622.0,1669.4" fill="none" stroke="#fcd57e" stroke-width="2"/>
<polyline points="772.0,1675.5 687.7,1645.5 658.0,1645.5" fill="none" stroke="#3aa2cc" stroke-width="2"/>
<polyline points="772.5,1675.8 767.0,1621.4 738.0,1621.4" fill="none" stroke="#94ef80" stroke-width="2"/>
<text x="1005" y="1776.5" font-size="24.5" textLength="272.5" lengthAdjust="spacingAndGlyphs" fill="#4a4a4a">Web 页面浏览时长: 3788</text>
<text x="535" y="1785.5" font-size="24.5" fill="#4a4a4a" text-anchor="end">Web 浏览页面: 3199</text>
<text x="589" y="1699.5" font-size="24.5" textLength="258" lengthAdjust="spacingAndGlyphs" fill="#4a4a4a" text-anchor="end">Web 页面加载时长: 258</text>
<text x="616" y="1676" font-size="24.5" fill="#4a4a4a" text-anchor="end">Web 视区停留: 24</text>
<text x="651" y="1652" font-size="24.5" fill="#4a4a4a" text-anchor="end">$SignUp: 3</text>
<text x="730" y="1629" font-size="24.5" textLength="168" lengthAdjust="spacingAndGlyphs" fill="#4a4a4a" text-anchor="end">点击搜索按钮: 1</text>
</g>
</svg>
</body></html>
